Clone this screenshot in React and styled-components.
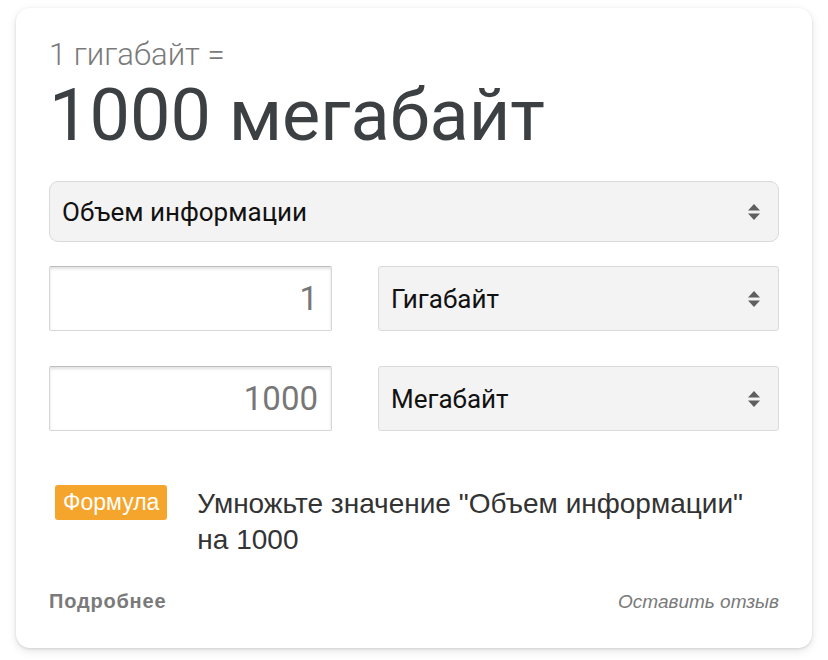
import React from 'react'
import styled, { createGlobalStyle } from 'styled-components'

const GlobalStyle = createGlobalStyle`
  body {
    margin: 0;
    background: #ffffff;
    font-family: Roboto, "Liberation Sans", sans-serif;
  }
`

const Arrows = () => (
  <svg width="14" height="18" viewBox="0 0 14 18">
    <path d="M7 1 L13 7.5 L1 7.5 Z" fill="#5f5f5f" />
    <path d="M7 17 L13 10.5 L1 10.5 Z" fill="#5f5f5f" />
  </svg>
)

const App = () => {
  return (
    <Page>
      <GlobalStyle />
      <Card>
        <Label>1 гигабайт =</Label>
        <Result>1000 мегабайт</Result>
        <Select $big>
          <span>Объем информации</span>
          <Arrows />
        </Select>
        <Rows>
          <ValueBox>1</ValueBox>
          <Select>
            <span>Гигабайт</span>
            <Arrows />
          </Select>
          <ValueBox>1000</ValueBox>
          <Select>
            <span>Мегабайт</span>
            <Arrows />
          </Select>
        </Rows>
        <Formula>
          <Badge>Формула</Badge>
          <FormulaText>Умножьте значение "Объем информации" на 1000</FormulaText>
        </Formula>
        <Footer>
          <More>Подробнее</More>
          <Feedback>Оставить отзыв</Feedback>
        </Footer>
      </Card>
    </Page>
  )
}

export default App

const Page = styled.div`
  padding: 8px 16px 12px;
`
const Card = styled.div`
  box-sizing: border-box;
  height: 640px;
  padding: 30px 33px 0;
  background: #fff;
  border-radius: 14px;
  box-shadow: 0 1px 3px rgba(0, 0, 0, 0.12), 0 3px 10px rgba(0, 0, 0, 0.1);
  display: flex;
  flex-direction: column;
`
const Label = styled.div`
  font-family: Roboto, sans-serif;
  font-weight: 300;
  font-size: 31px;
  line-height: 34px;
  color: #7a7a7a;
`
const Result = styled.div`
  font-family: Roboto, sans-serif;
  font-size: 72px;
  line-height: 84px;
  color: #3c4043;
  margin-top: 2px;
`
const Select = styled.div`
  box-sizing: border-box;
  height: ${p => (p.$big ? '61px' : '65px')};
  margin-top: ${p => (p.$big ? '23px' : '0')};
  padding: 0 17px 0 12px;
  display: flex;
  align-items: center;
  justify-content: space-between;
  background: #f3f3f3;
  border: 1px solid #dadada;
  border-radius: ${p => (p.$big ? '9px' : '3px')};
  font-family: Roboto, sans-serif;
  font-size: 26px;
  color: #111;
`
const Rows = styled.div`
  display: grid;
  grid-template-columns: 283px 1fr;
  column-gap: 46px;
  row-gap: 35px;
  margin-top: 24px;
`
const ValueBox = styled.div`
  box-sizing: border-box;
  height: 65px;
  padding: 0 13px;
  display: flex;
  align-items: center;
  justify-content: flex-end;
  border: 1px solid #d6d6d6;
  border-top-color: #bdbdbd;
  border-radius: 2px;
  box-shadow: inset 0 2px 3px rgba(0, 0, 0, 0.12);
  font-family: Roboto, sans-serif;
  font-size: 33px;
  color: #777;
`
const Formula = styled.div`
  display: flex;
  align-items: flex-start;
  gap: 30px;
  margin-top: 54px;
  padding-left: 6px;
`
const Badge = styled.div`
  flex: none;
  height: 35px;
  padding: 0 8px;
  display: flex;
  align-items: center;
  background: #f5a52c;
  border-radius: 3px;
  color: #fff;
  font-family: "Liberation Sans", Arial, sans-serif;
  font-size: 23px;
`
const FormulaText = styled.div`
  font-family: "Liberation Sans", Arial, sans-serif;
  font-size: 28px;
  line-height: 36px;
  margin-top: 1px;
  color: #333;
  max-width: 565px;
`
const Footer = styled.div`
  display: flex;
  justify-content: space-between;
  align-items: center;
  margin-top: 32px;
  font-family: "Liberation Sans", Arial, sans-serif;
  font-size: 19px;
  color: #7a7a7a;
`
const More = styled.span`
  font-weight: bold;
  font-size: 20px;
  letter-spacing: 0.8px;
`
const Feedback = styled.span`
  font-style: italic;
`
